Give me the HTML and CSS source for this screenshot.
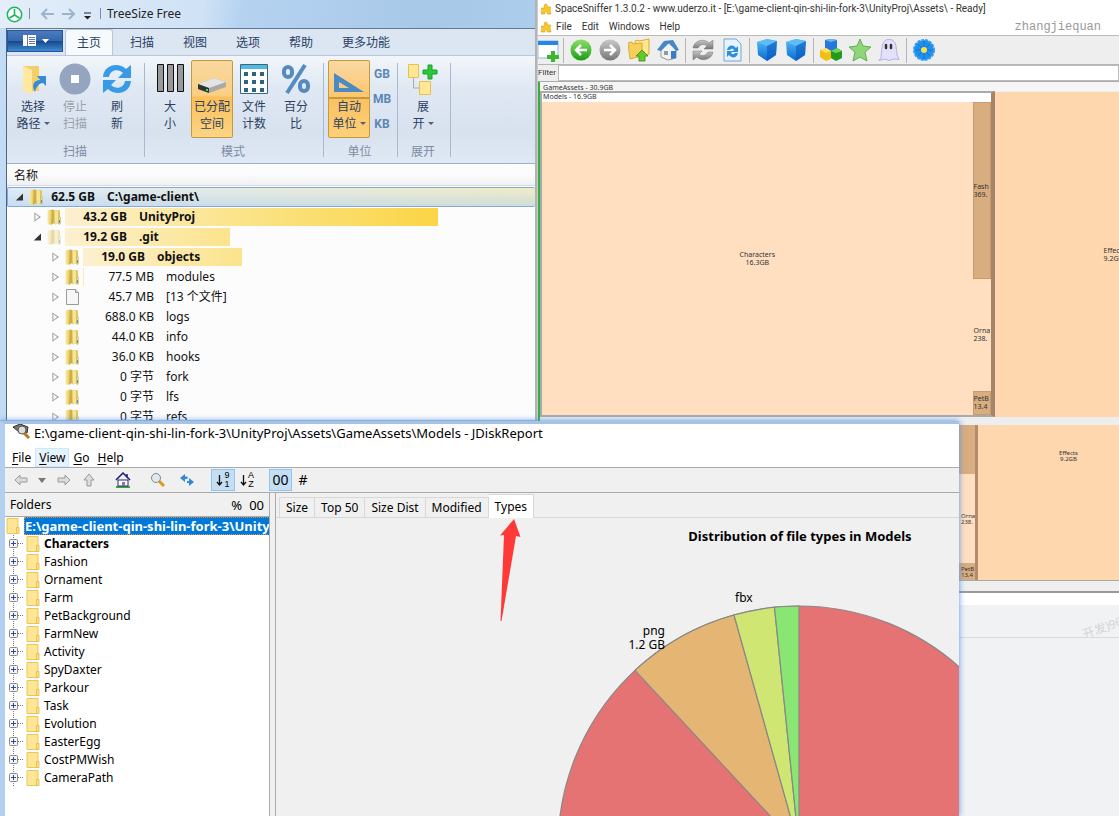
FILE: index.html
```html
<!DOCTYPE html>
<html lang="zh-CN">
<head>
<meta charset="utf-8">
<title>Disk usage tools</title>
<link rel="stylesheet" href="styles.css">
</head>
<body>
<svg class="defs" aria-hidden="true">
  <defs>
    <linearGradient id="gold" x1="0" x2="1"><stop offset="0" stop-color="#f8ecab"/><stop offset="1" stop-color="#e3c55e"/></linearGradient>
    <linearGradient id="blue" x1="0" y1="0" x2="0" y2="1"><stop offset="0" stop-color="#57bcf5"/><stop offset="1" stop-color="#0868d4"/></linearGradient>
    <linearGradient id="green" x1="0" y1="0" x2="0" y2="1"><stop offset="0" stop-color="#8bdf69"/><stop offset="1" stop-color="#1b9c12"/></linearGradient>
    <linearGradient id="grey" x1="0" y1="0" x2="0" y2="1"><stop offset="0" stop-color="#c8c8c8"/><stop offset="1" stop-color="#777"/></linearGradient>
    <symbol id="folder" viewBox="0 0 16 18"><path d="M7 2h5l1 1v13H7z" fill="#e2c560"/><path d="M.5 2.500L5 1.500v13L4 16.500H.5z" fill="url(#gold)"/><path d="M5 1.500L7 2v13l-3 2z" fill="#d0ad45"/><path d="M7.500 2l3.500.5v13L8 17z" fill="#f5e597"/><path d="M12 9h1.500v7l-1.500.5z" fill="#e6eef0" stroke="#caa63b" stroke-width=".5"/><path d="M12.500 12v3" stroke="#3896d8"/></symbol>
    <symbol id="page" viewBox="0 0 16 18"><path d="M1.500 1.500h9l3 3v12h-12z" fill="#f6f6f6" stroke="#999"/><path d="M10.500 1.500v3h3" fill="#ddd" stroke="#999"/></symbol>
    <symbol id="flat" viewBox="0 0 14 16"><path d="M1 .5h11v15H1z" fill="#ffe596" stroke="#e9c858"/><path d="M10.500 9.500H13v6h-2.500z" fill="#ffe082" stroke="#e2b945" stroke-width=".8"/></symbol>
    <symbol id="plus" viewBox="0 0 18 18"><path d="M4.500 0v18M9 8.500h6" stroke="#777" stroke-dasharray="1 1"/><rect x=".5" y="4.500" width="8" height="8" rx="1" fill="#f5f5f5" stroke="#888"/><path d="M2 8.500h5M4.500 6v5" stroke="#2b4a9b"/></symbol>
    <symbol id="puzzle" viewBox="0 0 12 12"><path d="M1.500 5h3C2.500 0 8.500 0 7 4h3.500l-.5 3.500 1 3.500H7c1-3-3-3-2 0H1l.5-2.500c3 0 2-3 0-1z" fill="#f8c928" stroke="#d79a16" stroke-width=".6"/></symbol>
    <symbol id="cube" viewBox="0 0 22 24"><path d="M1 4l10-3 10 2-1 14-9 6-9-6z" fill="url(#blue)"/><path d="M1 4l10 4 10-5-10-2z" fill="#5ebcf8"/><path d="M11 8l10-5-1 14-9 6z" fill="#0759bd" opacity=".6"/></symbol>
  </defs>
</svg>
<main class="desktop">
  <div class="upper">
    <section class="treesize">
      <header class="ts-title">
        <svg width="17" height="17" viewBox="0 0 17 17"><circle cx="8.500" cy="8.500" r="7.200" fill="#fff" stroke="#18b85d" stroke-width="1.500"/><path d="M8.500 3v6M8.500 9l-5 3M8.500 9l5 3" stroke="#18b85d" stroke-width="1.600"/></svg>
        <svg width="66" height="16" viewBox="0 0 66 16" fill="none"><path d="M1.500 2v11" stroke="#7e8da3"/><path d="M26 8H14m5-5l-5 5 5 5M34 8h12m-5-5l5 5-5 5" stroke="#9fb3cf" stroke-width="2"/><path d="M56 7h7" stroke="#222"/><path d="M56 10h7l-3.500 3.500z" fill="#222"/></svg>
        <svg width="3" height="16"><path d="M1.500 2v11" stroke="#7e8da3"/></svg>
        <h1>TreeSize Free</h1>
      </header>
      <div class="ts-body">
        <nav class="ts-tabs">
          <button class="file" aria-label="文件"><svg width="28" height="14" viewBox="0 0 28 14"><path d="M1 1h13v11H1z" fill="#fff"/><path d="M5.500 1v11M7 3.500h6M7 5.500h6M7 7.500h6M7 9.500h6" stroke="#617ca7"/><path d="M20 5h7l-3.500 4z" fill="#fff"/></svg></button>
          <button class="tab on">主页</button><button class="tab">扫描</button><button class="tab">视图</button><button class="tab">选项</button><button class="tab">帮助</button><button class="tab">更多功能</button>
        </nav>
        <div class="ribbon">
          <div class="group">
            <div class="tools">
              <button class="tool"><svg viewBox="0 0 32 32"><path d="M6 3h16v25H6z" fill="#f3cf6a"/><path d="M6 3l9 4v24l-9-3z" fill="#ffe9a1"/><path d="M18 29c-4-7-1-12 5-12l-3-4h9v10l-3-3c-4 0-7 4-8 9z" fill="#378bd4"/></svg><span>选择<br>路径<i class="caret"></i></span></button>
              <button class="tool dim"><svg viewBox="0 0 32 32"><circle cx="16" cy="16" r="15.500" fill="#96a5bf"/><path d="M12 12h8v8h-8z" fill="#fff"/></svg><span>停止<br>扫描</span></button>
              <button class="tool"><svg viewBox="0 0 32 32" fill="#399be5"><path d="M2 14C3 1 18-1 25 6l5-4v13H17l5-5C17 5 9 7 8 14z"/><path d="M30 18c-1 13-16 15-23 8l-5 4V17h13l-5 5c5 5 13 3 14-4z"/></svg><span>刷<br>新</span></button>
            </div><p>扫描</p>
          </div>
          <div class="group">
            <div class="tools">
              <button class="tool"><svg viewBox="0 0 32 32" fill="#999" stroke="#111"><path d="M3.500 1.500h6v27h-6zM13.500 1.500h6v27h-6zM23.500 1.500h6v27h-6z"/></svg><span>大<br>小</span></button>
              <button class="tool on"><svg viewBox="0 0 32 32"><path d="M2 21l16-6 12 4v5l-17 6-11-4z" fill="#aaa"/><path d="M2 21l16-6 12 4-17 6z" fill="#e4e4e4"/><path d="M2 21l11 4v5L2 26z" fill="#333"/><path d="M10 27h2" stroke="#29e54b" stroke-width="2"/></svg><span>已分配<br>空间</span></button>
              <button class="tool"><svg viewBox="0 0 32 32"><path d="M2.500 1.500h27v29h-27z" fill="#fff" stroke="#326981"/><path d="M3 2h26v4H3z" fill="#55b8e0"/><path d="M6 11h20M6 19h20M6 27h20" stroke="#2f6480" stroke-width="4" stroke-dasharray="4 4"/></svg><span>文件<br>计数</span></button>
              <button class="tool"><svg viewBox="0 0 32 32" fill="none" stroke="#568bbf" stroke-width="4"><rect x="4" y="4" width="8" height="10" rx="4"/><rect x="20" y="18" width="8" height="10" rx="4"/><path d="M25 2L7 30"/></svg><span>百分<br>比</span></button>
            </div><p>模式</p>
          </div>
          <div class="group">
            <div class="tools">
              <button class="tool on split"><svg viewBox="0 0 32 32"><path d="M1 10v19h30zM6 19l10 6H6z" fill="#4d89c3" fill-rule="evenodd"/></svg><span>自动<br>单位<i class="caret"></i></span></button>
              <div class="units"><button>GB</button><button>MB</button><button>KB</button></div>
            </div><p>单位</p>
          </div>
          <div class="group">
            <div class="tools">
              <button class="tool"><svg viewBox="0 0 32 32"><path d="M6.500 14v11H13" fill="none" stroke="#aaa"/><path d="M1.500 1.500h10v13h-10zM12.500 18.500h11v13h-11z" fill="#ffe795" stroke="#e3c250"/><path d="M21 2h4v5h5v4h-5v5h-4v-5h-5V7h5z" fill="#2bc63b" stroke="#17a126"/></svg><span>展<br>开<i class="caret"></i></span></button>
            </div><p>展开</p>
          </div>
        </div>
        <div class="ts-head">名称</div>
        <ul class="ts-list">
          <li class="root bold"><i class="open"></i><svg><use href="#folder"/></svg><div class="line"><span class="size">62.5 GB</span><span>C:\game-client\</span></div></li>
          <li class="l1 bold"><i class="shut"></i><svg><use href="#folder"/></svg><div class="line"><b class="bar most" style="width:79.4%"></b><span class="size">43.2 GB</span><span>UnityProj</span></div></li>
          <li class="l1 bold faded"><i class="open"></i><svg><use href="#folder"/></svg><div class="line"><b class="bar" style="width:35.1%"></b><span class="size">19.2 GB</span><span>.git</span></div></li>
          <li class="l2 bold"><i class="shut"></i><svg><use href="#folder"/></svg><div class="line"><b class="bar" style="width:35.2%"></b><span class="size">19.0 GB</span><span>objects</span></div></li>
          <li class="l2"><i class="shut"></i><svg><use href="#folder"/></svg><div class="line"><b class="bar" style="width:0.2%"></b><span class="size">77.5 MB</span><span>modules</span></div></li>
          <li class="l2"><i class="shut"></i><svg><use href="#page"/></svg><div class="line"><span class="size">45.7 MB</span><span>[13 个文件]</span></div></li>
          <li class="l2"><i class="shut"></i><svg><use href="#folder"/></svg><div class="line"><span class="size">688.0 KB</span><span>logs</span></div></li>
          <li class="l2"><i class="shut"></i><svg><use href="#folder"/></svg><div class="line"><span class="size">44.0 KB</span><span>info</span></div></li>
          <li class="l2"><i class="shut"></i><svg><use href="#folder"/></svg><div class="line"><span class="size">36.0 KB</span><span>hooks</span></div></li>
          <li class="l2"><i class="shut"></i><svg><use href="#folder"/></svg><div class="line"><span class="size">0 字节</span><span>fork</span></div></li>
          <li class="l2"><i class="shut"></i><svg><use href="#folder"/></svg><div class="line"><span class="size">0 字节</span><span>lfs</span></div></li>
          <li class="l2"><i class="shut"></i><svg><use href="#folder"/></svg><div class="line"><span class="size">0 字节</span><span>refs</span></div></li>
        </ul>
      </div>
    </section>

    <section class="sniffer">
      <header class="sn-title"><svg width="12" height="12"><use href="#puzzle"/></svg><h1>SpaceSniffer 1.3.0.2 - www.uderzo.it - [E:\game-client-qin-shi-lin-fork-3\UnityProj\Assets\ - Ready]</h1></header>
      <nav class="sn-menu"><svg width="12" height="12"><use href="#puzzle"/></svg><button>File</button><button>Edit</button><button>Windows</button><button>Help</button><span class="signature">zhangjiequan</span></nav>
      <div class="sn-tools">
        <button aria-label="New view" class="cut"><svg width="22" height="24" viewBox="0 0 22 24"><path d="M0 3h20v17H0z" fill="#fff" stroke="#8cb9e8"/><path d="M0 3h20v4H0z" fill="#2587e8"/><path d="M13 13h4v4h4v4h-4v3h-4v-3h-4v-4h4z" fill="#3db62f"/></svg></button>
        <hr>
        <button aria-label="Back"><svg viewBox="0 0 22 22"><circle cx="11" cy="11" r="10.500" fill="url(#green)"/><path d="M17 11H6m5-5l-5 5 5 5" fill="none" stroke="#fff" stroke-width="2.500"/></svg></button>
        <button aria-label="Forward"><svg viewBox="0 0 22 22"><circle cx="11" cy="11" r="10.500" fill="url(#grey)"/><path d="M5 11h11m-5-5l5 5-5 5" fill="none" stroke="#fff" stroke-width="2.500"/></svg></button>
        <button aria-label="Parent folder"><svg viewBox="0 0 22 22"><path d="M7 2l3-1 1 1 10-2v15l-12 3z" fill="#ffe58c" stroke="#d7ac32"/><path d="M0 4l4-1 1 2 9-1v13l-12 3z" fill="#f8cf5b" stroke="#d7ac32"/><path d="M14 11l6 6h-3v5h-6v-5H8z" fill="#62c830" stroke="#479d20"/></svg></button>
        <button aria-label="Home"><svg viewBox="0 0 22 22"><path d="M4 9l5-6 10 6v10l-8 2-7-3z" fill="#f2f2f2" stroke="#999"/><path d="M0 11L7 2l9-1 6 10-3 1-7-8-8 8z" fill="#4687c8"/><path d="M14 12h5v7l-5 1z" fill="#347fc5"/><path d="M7 12h4v4H7z" fill="#8c9bab"/></svg></button>
        <hr>
        <button aria-label="Refresh"><svg viewBox="0 0 22 22" fill="url(#grey)" stroke="#777" stroke-width=".5"><path d="M1 9C2 1 13-1 17 4l4-3v9h-9l3-3c-4-3-7-1-9 2z"/><path d="M21 13c-1 8-12 10-16 5l-4 3v-9h9l-3 3c4 3 7 1 9-2z"/></svg></button>
        <button aria-label="Refresh view"><svg viewBox="0 0 22 22"><path d="M3 0h12l5 5v17H3z" fill="#e5f2ff" stroke="#76a5d2"/><path d="M6 11c1-5 6-6 9-2l2-2v6h-6l2-2c-2-2-3-1-4 0zM17 14c-1 5-6 6-9 2l-2 2v-6h6l-2 2c2 2 3 1 4 0z" fill="#2d8dde"/></svg></button>
        <hr>
        <button aria-label="Less detail"><svg><use href="#cube"/></svg></button>
        <button aria-label="More detail"><svg><use href="#cube"/></svg></button>
        <hr>
        <button aria-label="File classes"><svg viewBox="0 0 22 22"><path d="M5 1l6-1 6 1v9l-6 3-6-3z" fill="#2678db"/><path d="M5 1l6-1 6 1-6 2z" fill="#6db4f5"/><path d="M0 11l6-2 5 3v8l-5 2-6-4z" fill="#f4bd12"/><path d="M0 11l6-2 5 3-5 2z" fill="#ffe168"/><path d="M11 12l6-3 5 3v7l-6 3-5-3z" fill="#259a1c"/><path d="M11 12l6-3 5 3-6 2z" fill="#71d35d"/></svg></button>
        <button aria-label="Favourites"><svg viewBox="0 0 22 22"><path d="M11 0l3 7 8 1-6 5 2 9-7-4-7 4 2-9-6-5 8-1z" fill="#8dd779" stroke="#66ac58"/></svg></button>
        <button aria-label="Ghost"><svg viewBox="0 0 22 22"><path d="M3 19C4 6 4 .5 11 .5S18 6 19 16l2 4.500-5-.5-5 1.500-4-1.500-6 1.500z" fill="#e3e0fb" stroke="#b7b1e4"/><path d="M8 6v3M13 6v3" stroke="#333" stroke-width="2.500" stroke-linecap="round"/></svg></button>
        <hr>
        <button aria-label="Settings"><svg viewBox="0 0 22 22"><circle cx="11" cy="11" r="10" fill="#1d91ef" stroke="#3a9cf0" stroke-width="2" stroke-dasharray="3 1"/><path d="M11 2v18M2 11h18M5 5l12 12M17 5L5 17" stroke="#1671d0"/><circle cx="11" cy="11" r="3" fill="#ffdf42"/></svg></button>
      </div>
      <label class="sn-filter"><span>Filter</span><input type="text"></label>
      <div class="sn-map">
        <div class="assets">GameAssets - 30.9GB</div>
        <div class="models"><div class="models-name">Models - 16.9GB</div>
          <div class="blocks"><div class="characters">Characters<br>16.3GB</div><div class="strip"><div class="block brown fashion">Fash<br>369.</div><div class="block orn">Orna<br>238.</div><div class="block brown pet">PetB<br>13.4</div></div></div>
        </div>
        <div class="effects">Effects<br>9.2GB</div>
      </div>
    </section>
  </div>

  <div class="lower">
    <section class="jdisk">
      <header class="jd-title"><svg width="18" height="16" viewBox="0 0 18 16"><path d="M0 3l7-3 8 3-1 6-8-1z" fill="#777" stroke="#333"/><circle cx="9" cy="6" r="4" fill="#ddd" stroke="#555"/><path d="M11 9l5 5" stroke="#b87820" stroke-width="3"/></svg><h1>E:\game-client-qin-shi-lin-fork-3\UnityProj\Assets\GameAssets\Models - JDiskReport</h1></header>
      <nav class="jd-menu"><button><u>F</u>ile</button><button class="on"><u>V</u>iew</button><button><u>G</u>o</button><button><u>H</u>elp</button></nav>
      <div class="jd-tools">
        <button aria-label="Back" class="w24"><svg viewBox="0 0 16 16"><path d="M2 8l5-5v3h7v4H7v3z" fill="#ddd" stroke="#999"/></svg></button>
        <button aria-label="History" class="w18"><svg viewBox="0 0 16 16"><path d="M4 6h8l-4 5z" fill="#777"/></svg></button>
        <button aria-label="Forward" class="w26"><svg viewBox="0 0 16 16"><path d="M14 8L9 3v3H2v4h7v3z" fill="#ddd" stroke="#999"/></svg></button>
        <button aria-label="Up" class="w24"><svg viewBox="0 0 16 16"><path d="M8 2l5 6h-3v6H6V8H3z" fill="#ddd" stroke="#999"/></svg></button>
        <button aria-label="Home" class="w44"><svg viewBox="0 0 16 16"><path d="M1 15h14" stroke="#3aa638" stroke-width="2"/><path d="M3 8h10v6H3z" fill="#fff" stroke="#222b80"/><path d="M1 8l7-7 7 7M12 5V2" fill="none" stroke="#181b70" stroke-width="1.500"/><path d="M7 10h3v4H7z" fill="#8b73b9"/></svg></button>
        <button aria-label="Find" class="w26"><svg viewBox="0 0 16 16"><circle cx="6" cy="6" r="4.500" fill="#dce9ed" stroke="#888"/><path d="M9 9l5 5" stroke="#d69b21" stroke-width="3"/></svg></button>
        <button aria-label="Reload" class="w32"><svg viewBox="0 0 16 16"><path d="M1 6l5-4v2.500h2.500V7H6v3zM15 10l-5-4v3H8v2h2v3z" fill="#3687d1"/></svg></button>
        <button aria-label="Sort by size" class="pick sort1"><svg viewBox="0 0 16 16"><path d="M3.500 3v10M1 10l2.500 3L6 10" fill="none" stroke="#111" stroke-width="1.300"/></svg><span>9<br>1</span></button>
        <button aria-label="Sort by name" class="sort2"><svg viewBox="0 0 16 16"><path d="M3.500 3v10M1 10l2.500 3L6 10" fill="none" stroke="#111" stroke-width="1.300"/></svg><span>A<br>Z</span></button>
        <button class="pick zeros">00</button><button class="hash">#</button>
      </div>
      <div class="jd-main">
        <aside class="folders">
          <div class="fhead"><span>Folders</span><span class="mark">%</span><span class="mark">00</span></div>
          <ul class="ftree">
            <li class="top"><svg><use href="#flat"/></svg><span>E:\game-client-qin-shi-lin-fork-3\UnityProj</span></li>
            <li class="bold"><svg class="ex"><use href="#plus"/></svg><svg><use href="#flat"/></svg><span>Characters</span></li>
            <li><svg class="ex"><use href="#plus"/></svg><svg><use href="#flat"/></svg><span>Fashion</span></li>
            <li><svg class="ex"><use href="#plus"/></svg><svg><use href="#flat"/></svg><span>Ornament</span></li>
            <li><svg class="ex"><use href="#plus"/></svg><svg><use href="#flat"/></svg><span>Farm</span></li>
            <li><svg class="ex"><use href="#plus"/></svg><svg><use href="#flat"/></svg><span>PetBackground</span></li>
            <li><svg class="ex"><use href="#plus"/></svg><svg><use href="#flat"/></svg><span>FarmNew</span></li>
            <li><svg class="ex"><use href="#plus"/></svg><svg><use href="#flat"/></svg><span>Activity</span></li>
            <li><svg class="ex"><use href="#plus"/></svg><svg><use href="#flat"/></svg><span>SpyDaxter</span></li>
            <li><svg class="ex"><use href="#plus"/></svg><svg><use href="#flat"/></svg><span>Parkour</span></li>
            <li><svg class="ex"><use href="#plus"/></svg><svg><use href="#flat"/></svg><span>Task</span></li>
            <li><svg class="ex"><use href="#plus"/></svg><svg><use href="#flat"/></svg><span>Evolution</span></li>
            <li><svg class="ex"><use href="#plus"/></svg><svg><use href="#flat"/></svg><span>EasterEgg</span></li>
            <li><svg class="ex"><use href="#plus"/></svg><svg><use href="#flat"/></svg><span>CostPMWish</span></li>
            <li><svg class="ex"><use href="#plus"/></svg><svg><use href="#flat"/></svg><span>CameraPath</span></li>
          </ul>
        </aside>
        <div class="report">
          <div class="rtabs"><button>Size</button><button>Top 50</button><button>Size Dist</button><button>Modified</button><button class="on">Types</button></div>
          <svg class="chart" viewBox="0 0 683 298" preserveAspectRatio="xMinYMin slice" role="img" aria-label="Distribution of file types in Models">
            <g stroke="#888" stroke-width="1.200">
              <circle cx="523" cy="329" r="241" fill="#e57373"/>
              <path d="M523 329L359 152.400A241 241 0 0 1 458 97z" fill="#e5b673"/>
              <path d="M523 329L458 97A241 241 0 0 1 498.500 89.200z" fill="#cfe673"/>
              <path d="M523 329L498.500 89.200A241 241 0 0 1 523 88z" fill="#8ae673"/>
            </g>
            <text class="ctitle" x="524" y="23">Distribution of file types in Models</text>
            <text x="459" y="84">fbx</text><text class="end" x="389" y="117">png</text><text class="end" x="389" y="131">1.2 GB</text>
            <path d="M238 1l6.500 18-4.500-1-14.500 85h-1l3.500-86-4 .500z" fill="#ff3a36"/>
          </svg>
        </div>
      </div>
    </section>
    <section class="behind">
      <div class="bmap"><div class="bstrip"><div class="bfash"></div><div class="born">Orna<br>238.</div><div class="bpet">PetB<br>13.4</div></div><div class="beffects">Effects<br>9.2GB</div></div>
      <div class="bbar"></div><div class="bwhite"></div><div class="bpage"><span>开发)96</span></div>
    </section>
  </div>
</main>
</body>
</html>
```
FILE: styles.css
```css
* { box-sizing: border-box; }
body { margin: 0; font: 12px/18px "Noto Sans", "Noto Sans CJK SC", sans-serif; color: #111; }
h1, p, ul { margin: 0; padding: 0; font: inherit; list-style: none; }
button { margin: 0; padding: 0; border: 0; background: none; font: inherit; color: inherit; white-space: nowrap; }
svg { flex: none; display: block; }
.defs { position: absolute; width: 0; height: 0; }
.desktop { height: 100vh; display: grid; grid-template-rows: 421px minmax(0, 1fr); overflow: hidden; }
.upper { display: grid; grid-template-columns: 48fr 52fr; min-height: 0; }
.bold { font-weight: 700; }

.treesize { display: flex; flex-direction: column; min-width: 0; overflow: hidden; background: linear-gradient(90deg, #c3dcf5, #b5d3f1 50%, #a8c8e8); border-right: 2px solid #b0b3b8; border-bottom: 1px solid #aec3df; }
.ts-title { height: 28px; display: flex; align-items: center; padding-left: 6px; gap: 5px; background: linear-gradient(100deg, #e4eef9, #cfe2f6 38%, #b5d3f1 45%, #a8c8e8 80%, #accdeb); }
.ts-title h1 { color: #222; }
.ts-body { flex: 1; min-height: 0; margin-left: 6px; border-left: 1px solid #52657e; border-top: 1px solid #66788f; background: #fcfcfc; overflow: hidden; }
.ts-tabs { display: flex; height: 27px; align-items: flex-end; background: #dce6f2; color: #294164; border-bottom: 1px solid #b8c8dc; }
.file { align-self: flex-start; width: 56px; height: 22px; margin: 1px 2px 0 0; padding-left: 14px; border: 1px solid #24549a; background: linear-gradient(#4c7bbb, #3468b0 48%, #164688 50%, #3d8bd1); }
.tab { height: 26px; padding: 2px 12px 0; margin-right: 5px; }
.tab.on { background: #f7fafd; border: 1px solid #b8c8dc; border-bottom: 0; border-radius: 3px 3px 0 0; padding: 1px 11px 0; }
.ribbon { height: 108px; display: flex; padding: 4px 0 0 5px; background: linear-gradient(#f2f6fa, #dfe8f3 30%, #d8e2ef 70%, #dfe8f4); border-bottom: 1px solid #9eb1cb; color: #2b4161; }
.group { border-right: 1px solid #a9b9cf; height: 94px; padding-right: 6px; margin: 3px 4px 0 0; display: flex; flex-direction: column; }
.tools { display: flex; height: 78px; margin-top: -3px; }
.group p { color: #7d8ca3; text-align: center; padding-top: 5px; }
.tool { width: 42px; height: 78px; display: flex; flex-direction: column; align-items: center; padding-top: 3px; line-height: 17px; gap: 3px; }
.tool svg { width: 32px; height: 32px; }
.tool.dim { color: #9aa0aa; }
.tool.on { border: 1px solid #c49a3b; border-radius: 2px; background: linear-gradient(#f8d8a0, #fbcf81 45%, #fbbf59 48%, #fdd584); padding-top: 2px; }
.tool.split { background: linear-gradient(#f9d9a4, #fcc66c 48%, #c49a3b 48%, #c49a3b 50%, #fbc162 50%, #fdd078); }
.caret { display: inline-block; border: 3px solid transparent; border-top: 3px solid #50617c; border-bottom: 0; vertical-align: 3px; margin-left: 3px; }
.units { display: flex; flex-direction: column; padding: 2px 0 0 3px; width: 21px; color: #5b87b4; font: 700 12px/25px Roboto, sans-serif; }
.ts-head { height: 22px; padding: 3px 0 0 7px; background: linear-gradient(#fcfcfc 50%, #eff0f2); border-bottom: 1px solid #dcdce0; margin-bottom: 1px; }
.ts-list li { height: 20px; display: flex; align-items: center; white-space: nowrap; }
.ts-list svg { width: 16px; height: 18px; margin-right: 2px; }
.ts-list i { width: 12px; height: 10px; margin-right: 3px; flex: none; }
.shut { background: #999; clip-path: polygon(20% 5%, 75% 50%, 20% 95%, 20% 85%, 28% 80%, 60% 50%, 28% 20%, 28% 95%, 20% 95%); }
.open { background: #333; clip-path: polygon(75% 15%, 75% 85%, 15% 85%); }
.line { flex: 1; height: 18px; display: grid; grid-template-columns: 62px 1fr; column-gap: 12px; }
.line > * { grid-row: 1; }
.line .size { grid-column: 1; text-align: right; }
.line .size + span { grid-column: 2; }
.bar { grid-column: 1 / -1; background: linear-gradient(90deg, #fdf0d0, #fbe48c); }
.bar.most { background: linear-gradient(90deg, #fdf0d0, #fbe48c 45%, #fbd546); }
.root { padding-left: 6px; border: 1px solid #86aad8; border-right: 0; border-radius: 2px; background: linear-gradient(#ffffff20, #b8d4ee90), linear-gradient(90deg, #dce9f8, #eee9be); }
.root .line { grid-template-columns: 48px 1fr; }
.l1 { padding-left: 25px; }
.l2 { padding-left: 43px; }
.l2:not(.bold) .line { grid-template-columns: 71px 1fr; }
.faded svg { opacity: .45; }

.sniffer { display: flex; flex-direction: column; min-width: 0; overflow: hidden; background: #fff; border-left: 1px solid #ccc; font: 10px/16px Roboto, sans-serif; color: #333; }
.sn-title, .sn-menu { display: flex; align-items: center; height: 17px; padding-left: 2px; white-space: nowrap; }
.sn-title h1 { padding-left: 3px; }
.sn-menu { height: 18px; padding-top: 1px; }
.sn-menu button { margin: 0 7px 0 3px; }
.sn-menu svg { margin-right: 1px; }
.signature { margin-left: auto; padding-right: 18px; font: 12px/16px "Liberation Mono", monospace; color: #999; }
.sn-tools { height: 30px; display: flex; align-items: center; gap: 7px; background: #eee; border-top: 1px solid #bbb; border-bottom: 1px solid #b5b5b5; overflow: hidden; }
.sn-tools svg { width: 22px; height: 24px; }
.sn-tools .cut { margin-right: -3px; }
.sn-tools hr { width: 1px; height: 25px; margin: 0 -1px; border: 0; background: #b5b5b5; flex: none; }
.sn-filter { height: 17px; display: flex; background: #eee; border-bottom: 1px solid #aaa; font-size: 8px; }
.sn-filter span { width: 20px; white-space: nowrap; }
.sn-filter input { flex: 1; min-width: 0; border: 1px solid #bbb; padding: 0; background: #fff; }
.sn-map { flex: 1; min-height: 0; display: grid; grid-template-columns: 785fr 215fr; grid-template-rows: 9px 1fr; background: #eee; font: 7px/8px "Noto Sans", sans-serif; border-left: 2px solid #31b240; padding-bottom: 4px; }
.assets { grid-column: 1 / -1; padding: 2px 0 0 3px; background: #f5f5f5; }
.models { display: flex; flex-direction: column; min-width: 0; border: 2px solid #aaa; border-right: 4px solid #a5846a; }
.models-name { height: 9px; background: #fff; padding-left: 1px; }
.blocks { flex: 1; display: flex; min-height: 0; }
.characters { flex: 1; display: grid; place-content: center; text-align: center; background: #ffdfc0; }
.strip { width: 18px; display: flex; flex-direction: column; }
.block { overflow: hidden; display: flex; align-items: center; white-space: nowrap; padding-left: 1px; background: #ffdfc0; }
.brown { background: #d8ad80; border: 1px solid #c99c70; padding-left: 0; }
.fashion { flex: 178; }
.orn { flex: 114; }
.pet { flex: 22; }
.effects { background: #ffd7ae; margin-top: 1px; display: grid; place-content: center start; overflow: hidden; padding-left: 109px; }

.lower { display: grid; grid-template-columns: 85.7% 1fr; min-height: 0; }
.jdisk { display: flex; flex-direction: column; min-width: 0; min-height: 0; background: #fff; border-left: 5px solid #b3d0f0; border-top: 3px solid #a9c1e2; z-index: 1; box-shadow: 0 0 6px #4c94e8; color: #000; }
.jd-title { height: 20px; display: flex; gap: 3px; padding-left: 8px; white-space: nowrap; }
.jd-title h1 { font-size: 13px; }
.jd-menu { display: flex; height: 23px; padding: 4px 0 0 3px; align-items: flex-start; }
.jd-menu button { height: 19px; padding: 0 4px; }
.jd-menu .on { background: #e5f3ff; box-shadow: inset 0 0 0 1px #cce8ff; }
.jd-menu u { text-underline-offset: 2px; }
.jd-tools { display: flex; align-items: center; height: 26px; background: #f0f0f0; border: solid #aaa; border-width: 1px 0; padding-left: 4px; }
.jd-tools button { display: flex; justify-content: center; align-items: center; height: 22px; }
.jd-tools svg { width: 16px; height: 16px; }
.w24 { width: 24px; } .w18 { width: 18px; } .w26 { width: 26px; } .w44 { width: 44px; } .w32 { width: 32px; }
.jd-tools .pick { border: 1px solid #8fc4ee; background: #c4def4; }
.jd-tools .sort1, .jd-tools .sort2 { width: 24px; font: 9px/9px "Liberation Sans", sans-serif; }
.sort1 { margin-left: 8px; }
.sort1 svg, .sort2 svg { margin-right: -8px; }
.jd-tools .zeros { width: 23px; font-size: 14px; margin-left: 10px; }
.jd-tools .hash { width: 22px; font-size: 14px; }
.jd-main { flex: 1; min-height: 0; display: grid; grid-template-columns: 265px minmax(0, 1fr); column-gap: 5px; background: #f0f0f0; }
.folders { background: #fff; border-right: 1px solid #aaa; overflow: hidden; }
.fhead { display: flex; height: 24px; background: #f0f0f0; border-bottom: 1px solid #aaa; padding: 3px 5px 0; gap: 7px; }
.fhead span:first-child { margin-right: auto; }
.fhead .mark { font-size: 13px; }
.ftree li { height: 18px; display: flex; align-items: center; white-space: nowrap; padding-left: 4px; }
.ftree svg { width: 14px; height: 16px; margin-right: 4px; }
.ftree .ex { width: 18px; height: 18px; margin: 0 -1px 0 0; }
.ftree .top { padding-left: 1px; font-weight: 700; font-size: 13px; color: #fff; }
.ftree .top span { flex: 1; background: #0078d7; border: 1px dotted #e59145; line-height: 16px; }
.report { min-width: 0; min-height: 0; border-left: 1px solid #aaa; display: flex; flex-direction: column; }
.rtabs { height: 25px; display: flex; align-items: flex-end; padding-left: 3px; border-bottom: 1px solid #d8d8d8; }
.rtabs button { height: 20px; padding: 0 6px; border: 1px solid #d8d8d8; border-width: 1px 1px 0 0; }
.rtabs button:first-child { border-left-width: 1px; }
.rtabs .on { height: 24px; background: #fff; margin-bottom: -1px; }
.chart { flex: 1; width: 100%; min-height: 0; overflow: hidden; }
.chart text { font-size: 12px; fill: #000; }
.chart .ctitle { font-weight: 700; font-size: 13px; text-anchor: middle; }
.chart .end { text-anchor: end; }

.behind { min-width: 0; display: flex; flex-direction: column; overflow: hidden; border-top: 4px solid #eee; background: #f1f2f4; }
.bmap { height: 155px; display: flex; font: 6px/6px "Noto Sans", sans-serif; color: #333; }
.bstrip { width: 19px; display: flex; flex-direction: column; border-right: 3px solid #b18c6e; background: #ffdfc0; white-space: nowrap; }
.bstrip div { overflow: hidden; padding-left: 2px; display: flex; align-items: center; }
.bfash { flex: 49; background: #d8ad80; }
.born { flex: 89; }
.bpet { flex: 17; background: #d8ad80; }
.beffects { flex: 1; background: #ffd7ae; padding: 25px 0 0 40px; text-align: center; }
.bbar { height: 13px; background: #eee; border-top: 1px solid #aaa; border-bottom: 2px solid #999; }
.bwhite { height: 12px; background: #fff; }
.bpage { height: 33px; border-bottom: 1px solid #d8dade; position: relative; overflow: hidden; }
.bpage span { position: absolute; right: -4px; top: 14px; color: #d3d5d8; transform: rotate(-20deg); }
```
